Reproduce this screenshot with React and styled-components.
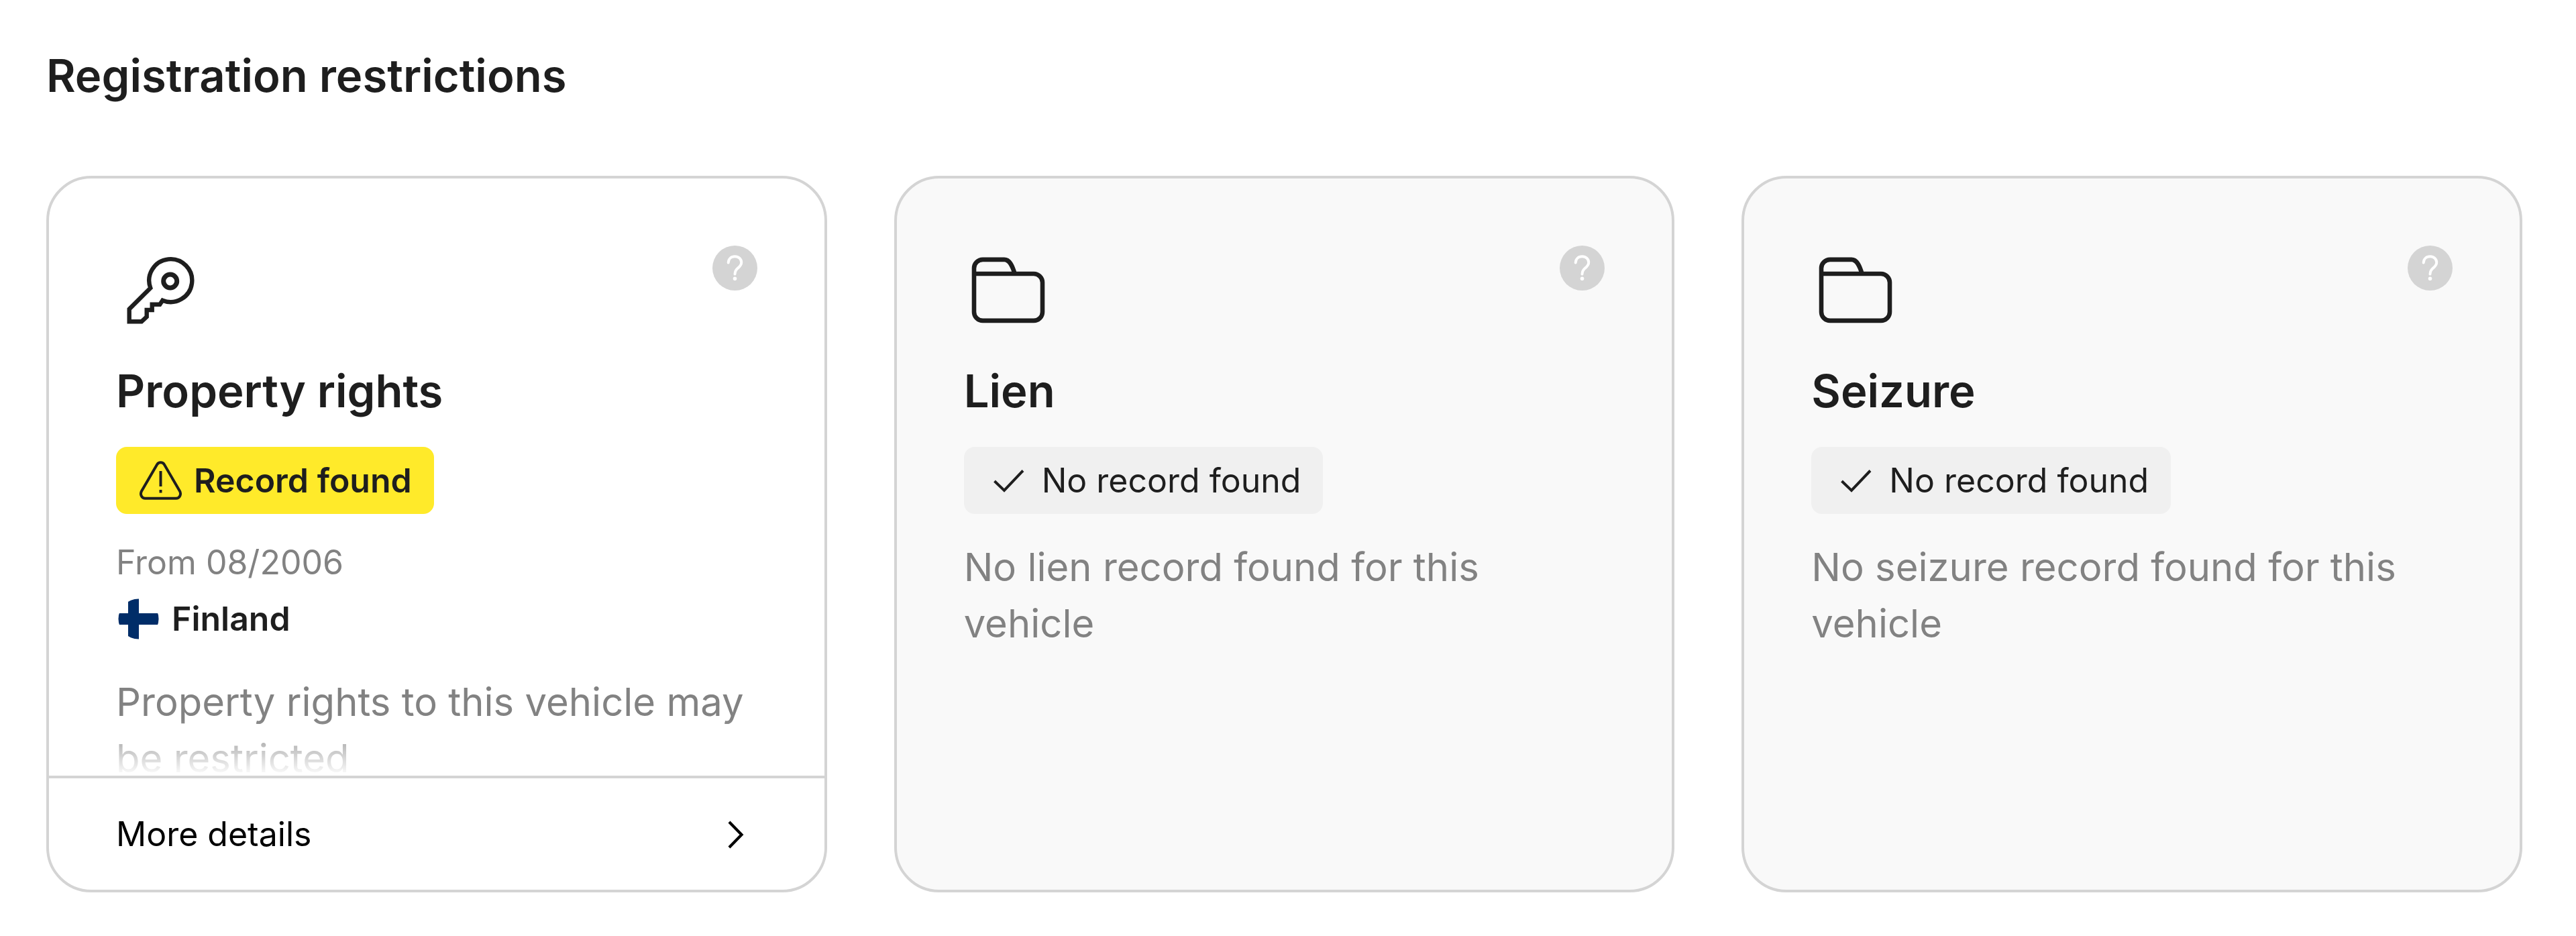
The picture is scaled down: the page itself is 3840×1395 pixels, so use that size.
import React from 'react'
import styled, { createGlobalStyle } from 'styled-components';

const GlobalStyle = createGlobalStyle`
*{
  box-sizing: border-box;
}

body{
  margin: 0;
  background: #fff;
  color: #1e1e1e;
  font-family: Inter, "Liberation Sans", sans-serif;
}

h2, h3, p{
  margin: 0;
}

button{
  border: 0;
  padding: 0;
  background: none;
  font: inherit;
  cursor: pointer;
}

svg{
  display: block;
  flex: none;
}
`;

const StyledRestrictions = styled.section`
padding: 63px 80px 66px 69px;
`;

const SectionTitle = styled.h2`
font-size: 67px;
font-weight: 600;
line-height: 100px;
margin-bottom: 99px;
`;

const CardGrid = styled.div`
display: grid;
grid-template-columns: repeat(3, 1fr);
gap: 100px;
`;

const StyledCard = styled.article`
display: flex;
flex-direction: column;
overflow: hidden;
border: 4px solid #d4d4d4;
border-radius: 67px;
background: ${({$muted}) => $muted ? '#f9f9f9' : '#fff'};
`;

const CardBody = styled.div`
flex: 1;
padding: 100px 100px 0;
`;

const CardTop = styled.div`
display: flex;
align-items: flex-start;
justify-content: space-between;
margin-bottom: 33px;
`;

const HelpButton = styled.button`
border-radius: 50%;
`;

const CardTitle = styled.h3`
font-size: 67px;
font-weight: 600;
line-height: 100px;
margin-bottom: 33px;
`;

const Badge = styled.div`
display: flex;
align-items: center;
gap: 16px;
width: max-content;
height: 100px;
padding: 0 33px;
border-radius: 16px;
background: ${({$found}) => $found ? '#ffea2a' : '#f0f0f0'};
font-size: 50px;
font-weight: ${({$found}) => $found ? 600 : 400};
`;

const RecordInfo = styled.div`
margin-top: 30px;
font-size: 50px;
line-height: 84px;

.from{
  color: #828282;
}

.country{
  display: flex;
  align-items: center;
  gap: 16px;
  font-weight: 600;
}
`;

const Description = styled.p`
margin-top: ${({$faded}) => $faded ? '40px' : '37px'};
font-size: 58px;
line-height: 84px;
color: #828282;

/* the last line fades out right above the footer */
${({$faded}) => $faded && `
  max-height: 168px;
  margin-bottom: -16px;
  overflow: hidden;
  mask-image: linear-gradient(to top, transparent 16px, #000 100px);
`}
`;

const MoreButton = styled.button`
display: flex;
align-items: center;
justify-content: space-between;
height: 170px;
padding: 0 100px;
border-top: 4px solid #d4d4d4;
color: #000;
font-size: 50px;
`;

const KeyIcon = () => (
  <svg width="134" height="134" viewBox="0 0 134 134" fill="none" stroke="#1e1e1e" strokeWidth="6.4">
    <path d="M19.7 113.3V94.7L51.3 63.3A32 32 0 1 1 69.3 81.8L65.3 87.7H53.7V96H45.7V106L38 113.3Z" />
    <circle cx="80.7" cy="53" r="10" strokeWidth="7" />
  </svg>
)

const FolderIcon = () => (
  <svg width="134" height="134" viewBox="0 0 134 134" fill="none" stroke="#1e1e1e" strokeWidth="6.6">
    <path d="M75.5 41.5C72 30 68 20.9 60 20.9H28A13 13 0 0 0 15 33.9V98.9A13 13 0 0 0 28 111.9H104A13 13 0 0 0 117 98.9V55A13 13 0 0 0 104 42H15" />
  </svg>
)

const HelpIcon = () => (
  <svg width="67" height="67" viewBox="0 0 67 67" fill="none">
    <circle cx="33.5" cy="33.5" r="33.5" fill="#d4d4d4" />
    <path d="M23.7 25.5C24 19.5 28 16.3 33.5 16.3C39 16.3 43.2 20 43.2 25C43.2 29.5 40.5 31.5 37.5 34C34.5 36.5 33.7 38.5 33.5 42.5" stroke="#fff" strokeWidth="4" strokeLinecap="round" />
    <circle cx="33.5" cy="49.3" r="2.8" fill="#fff" />
  </svg>
)

const WarningIcon = () => (
  <svg width="67" height="67" viewBox="0 0 67 67" fill="none" stroke="#1e1e1e" strokeWidth="4">
    <path d="M28 9.5C30.5 5.3 36.5 5.3 39 9.5L62 49C64.5 53.5 62 59.7 56.5 59.7H10.5C5 59.7 2.5 53.5 5 49Z" />
    <path d="M33.5 19V42M33.5 47V51.5" />
  </svg>
)

const CheckIcon = () => (
  <svg width="67" height="67" viewBox="0 0 67 67" fill="none" stroke="#1e1e1e" strokeWidth="4">
    <path d="M12.5 34L27 48L55 18.5" />
  </svg>
)

const ChevronIcon = () => (
  <svg width="67" height="67" viewBox="0 0 67 67" fill="none" stroke="#000" strokeWidth="4.2">
    <path d="M25 15L43.5 34L25 53" />
  </svg>
)

const FinlandFlag = () => (
  <svg width="67" height="67" viewBox="0 0 67 67">
    <clipPath id="flagRound">
      <circle cx="33.5" cy="33.5" r="30" />
    </clipPath>
    <g clipPath="url(#flagRound)">
      <rect width="67" height="67" fill="#fff" />
      <path d="M18 0H34V25H67V42H34V67H18V42H0V25H18Z" fill="#002d68" />
    </g>
  </svg>
)

const RestrictionCard = ({icon, title, found, from, country, text}) => {

  return (
    <StyledCard $muted={!found}>

        <CardBody>
          <CardTop>
            {icon}
            <HelpButton type="button" aria-label="Help"><HelpIcon /></HelpButton>
          </CardTop>

          <CardTitle>{title}</CardTitle>

          <Badge $found={found}>
            {found ? <WarningIcon /> : <CheckIcon />}
            {found ? 'Record found' : 'No record found'}
          </Badge>

          {found && (
            <RecordInfo>
              <div className="from">From {from}</div>
              <div className="country"><FinlandFlag />{country}</div>
            </RecordInfo>
          )}

          <Description $faded={found}>{text}</Description>
        </CardBody>

        {found && (
          <MoreButton type="button">More details<ChevronIcon /></MoreButton>
        )}

    </StyledCard>
  )
}

const App = () => {

  return (
    <StyledRestrictions>
        <GlobalStyle />

        <SectionTitle>Registration restrictions</SectionTitle>

        <CardGrid>
          <RestrictionCard
            icon={<KeyIcon />}
            title="Property rights"
            found
            from="08/2006"
            country="Finland"
            text="Property rights to this vehicle may be restricted"
          />
          <RestrictionCard
            icon={<FolderIcon />}
            title="Lien"
            text="No lien record found for this vehicle"
          />
          <RestrictionCard
            icon={<FolderIcon />}
            title="Seizure"
            text="No seizure record found for this vehicle"
          />
        </CardGrid>
    </StyledRestrictions>
  )
}

export default App
